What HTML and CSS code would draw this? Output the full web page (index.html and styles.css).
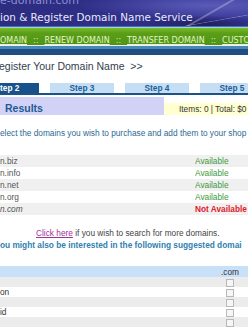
FILE: index.html
```html
<!DOCTYPE html>
<html>
	<head>
		<meta charset="utf-8">
		<title>Search &amp; Register Domain Name Service</title>
		<meta name="viewport" content="width=device-width, initial-scale=1">
		<link rel="stylesheet" href="styles.css">
	</head>
	<body>
		<div class="banner">
			<div class="site">e-domain.com</div>
			<div class="title">ion &amp; Register Domain Name Service</div>
		</div>
		<div class="navbar">
			<a href="#">OMAIN</a><span class="sep">::</span><a href="#">RENEW DOMAIN</a><span class="sep">::</span><a href="#">TRANSFER DOMAIN</a><span class="sep">::</span><a href="#">CUSTO</a>
		</div>
		<div class="rule"></div>
		<div class="content">
			<div class="pagetitle">egister Your Domain Name &nbsp;&gt;&gt;</div>
			<div class="steps">
				<div class="step current">Step 2</div>
				<div class="step">Step 3</div>
				<div class="step">Step 4</div>
				<div class="step">Step 5</div>
			</div>
			<div class="resultbar">
				<div class="resulttitle">Results</div>
				<div class="cart">Items: 0 | Total: $0</div>
			</div>
			<p class="intro">elect the domains you wish to purchase and add them to your shop</p>
			<table class="results">
				<tr><td>n.biz</td><td class="status ok">Available</td></tr>
				<tr><td>n.info</td><td class="status ok">Available</td></tr>
				<tr><td>n.net</td><td class="status ok">Available</td></tr>
				<tr><td>n.org</td><td class="status ok">Available</td></tr>
				<tr><td class="taken">n.com</td><td class="status no">Not Available</td></tr>
			</table>
			<p class="more"><a href="#">Click here</a> if you wish to search for more domains.</p>
			<p class="suggest">ou might also be interested in the following suggested domai</p>
			<table class="suggested">
				<tr class="head"><td></td><td class="tld">.com</td></tr>
				<tr><td></td><td class="tld"><span class="box"></span></td></tr>
				<tr><td>on</td><td class="tld"><span class="box"></span></td></tr>
				<tr><td></td><td class="tld"><span class="box"></span></td></tr>
				<tr><td>id</td><td class="tld"><span class="box"></span></td></tr>
				<tr><td></td><td class="tld"><span class="box"></span></td></tr>
			</table>
		</div>
	</body>
</html>
```

FILE: styles.css
```css
body{
	margin: 0;
	width: 248px;
	height: 330px;
	overflow: hidden;
	background: #fff;
	font-family: "Liberation Sans", Arial, sans-serif;
	font-size: 8.3px;
	color: #444;
}
.banner{
	height: 27px;
	overflow: hidden;
	background:
		linear-gradient(150deg, transparent 78%, rgba(255,255,255,.35) 79%, transparent 80%),
		linear-gradient(170deg, transparent 82%, rgba(255,255,255,.3) 83%, transparent 84%),
		radial-gradient(ellipse at 82% 90%, #1e1e60 0%, transparent 25%),
		radial-gradient(ellipse at 85% 20%, #5a5ab8 0%, transparent 45%),
		linear-gradient(90deg, #2c2c80 0%, #30308a 55%, #3b3b9c 100%);
}
.site{
	font-family: "DejaVu Sans", Verdana, sans-serif;
	font-size: 11px;
	line-height: 12px;
	margin-top: -5px;
	color: #8d8dd2;
}
.title{
	font-family: "DejaVu Sans", Verdana, sans-serif;
	font-size: 10.4px;
	line-height: 12px;
	margin-top: 4px;
	color: #e9e9fb;
	white-space: nowrap;
}
.navbar{
	display: flex;
	gap: 6px;
	white-space: nowrap;
	height: 17px;
	line-height: 25px;
	border-top: 1px solid #a9cde6;
	border-bottom: 1px solid #e8f2f8;
	box-shadow: 0 -1px 0 #3d78a8;
	background: linear-gradient(#7cbc2a, #5a9e18 30%, #4f9414);
	font-family: "DejaVu Sans", Verdana, sans-serif;
	font-size: 8px;
	color: #d8ecb0;
}
.navbar a{
	color: #e6f4c8;
}
.rule{
	height: 9px;
	background: linear-gradient(#4a86b8 0 3px, #1f4f82 3px);
}
.pagetitle{
	font-size: 10.5px;
	line-height: 12px;
	margin-top: 5px;
	margin-left: -1px;
	color: #34404c;
	white-space: nowrap;
}
.steps{
	display: flex;
	gap: 11px;
	margin: 11px 0 0 -25px;
	border-bottom: 2px solid #1b5288;
}
.step{
	flex: none;
	width: 64px;
	height: 10px;
	line-height: 11px;
	text-align: center;
	font-weight: bold;
	font-size: 8.3px;
	color: #1d5f98;
	background: #c5def4;
}
.step.current{
	background: #17528a;
	color: #fff;
}
.resultbar{
	display: flex;
	align-items: flex-end;
	margin-top: 2px;
}
.resulttitle{
	width: 159px;
	height: 18px;
	padding-left: 5px;
	line-height: 23px;
	font-size: 10.5px;
	font-weight: bold;
	color: #1f5a94;
	background: #d2d2f6;
}
.cart{
	flex: 1;
	height: 12px;
	line-height: 12px;
	padding-left: 15px;
	white-space: nowrap;
	overflow: hidden;
	color: #333;
	background: #ffffcf;
}
.intro{
	margin: 13px 0 0;
	line-height: 10px;
	white-space: nowrap;
	color: #2c6a94;
}
table{
	border-collapse: collapse;
	width: 248px;
	table-layout: fixed;
}
td{
	padding: 0;
	white-space: nowrap;
	overflow: hidden;
}
.results{
	margin-top: 17px;
}
.results td{
	height: 12px;
	line-height: 12px;
	color: #555;
}
.results tr:nth-child(odd){
	background: #f0f0f0;
}
.results .status{
	width: 53px;
}
.results .ok{
	color: #3b9a3b;
}
.results .no{
	color: #e0202a;
	font-weight: bold;
}
.results .taken{
	font-style: italic;
}
.more{
	margin: 13px 0 0;
	padding-left: 36px;
	line-height: 10px;
	color: #444;
}
.more a{
	color: #a0329a;
}
.suggest{
	margin: 2px 0 0;
	line-height: 10px;
	white-space: nowrap;
	font-weight: bold;
	color: #2f7fb0;
}
.suggested{
	margin-top: 16px;
}
.suggested td{
	height: 10px;
	line-height: 10px;
	color: #333;
}
.suggested .tld{
	width: 36px;
	text-align: center;
}
.suggested .head td{
	height: 11px;
	background: #c8e0f8;
}
.suggested tr:nth-child(even){
	background: #ececec;
}
.box{
	display: inline-block;
	width: 6px;
	height: 6px;
	vertical-align: middle;
	border: 1px solid #b8b8b8;
	background: #f6f6f6;
}
```
